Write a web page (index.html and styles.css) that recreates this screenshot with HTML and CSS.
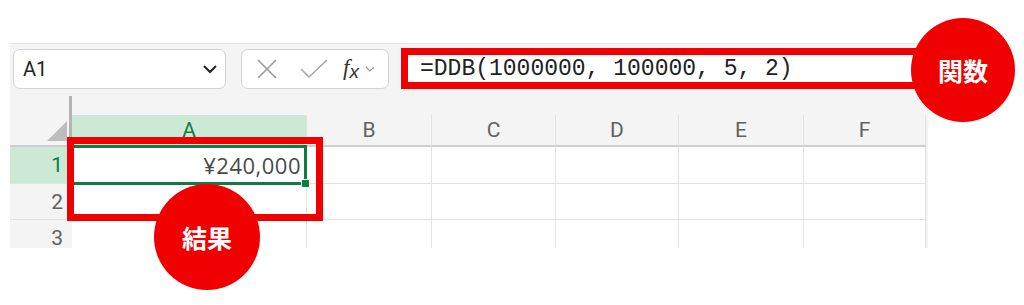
FILE: index.html
```html
<!DOCTYPE html>
<html lang="ja">
<head>
    <meta charset="UTF-8">
    <meta name="viewport" content="width=device-width, initial-scale=1.0">
    <title>DDB関数</title>
    <link rel="stylesheet" href="styles.css">
</head>
<body>
<div class="page">

    <div class="sheet">
        <div class="toolbar">
            <div class="namebox">
                <span>A1</span>
                <svg width="16" height="10" viewBox="0 0 16 10"><path d="M2 2 L8 8 L14 2" fill="none" stroke="#222" stroke-width="2"/></svg>
            </div>
            <div class="fxbox">
                <svg class="cancel" width="22" height="22" viewBox="0 0 22 22"><path d="M2 2 L20 20 M20 2 L2 20" stroke="#9a9a9a" stroke-width="1.6"/></svg>
                <svg class="enter" width="30" height="22" viewBox="0 0 30 22"><path d="M2 11 L10 19 L28 2" fill="none" stroke="#a8a8a8" stroke-width="1.6"/></svg>
                <span class="fx"><i>f</i><sub>x</sub></span>
                <svg width="10" height="6" viewBox="0 0 10 6"><path d="M1 1 L5 5 L9 1" fill="none" stroke="#999" stroke-width="1.2"/></svg>
            </div>
            <div class="formula">=DDB(1000000, 100000, 5, 2)</div>
        </div>

        <div class="split"></div>

        <div class="grid">
            <div class="corner"></div>
            <div class="colhead active">A</div>
            <div class="colhead">B</div>
            <div class="colhead">C</div>
            <div class="colhead">D</div>
            <div class="colhead">E</div>
            <div class="colhead">F</div>

            <div class="rowhead active">1</div>
            <div class="cell selected">¥240,000</div>
            <div class="cell"></div>
            <div class="cell"></div>
            <div class="cell"></div>
            <div class="cell"></div>
            <div class="cell"></div>

            <div class="rowhead">2</div>
            <div class="cell"></div>
            <div class="cell"></div>
            <div class="cell"></div>
            <div class="cell"></div>
            <div class="cell"></div>
            <div class="cell"></div>

            <div class="rowhead">3</div>
            <div class="cell"></div>
            <div class="cell"></div>
            <div class="cell"></div>
            <div class="cell"></div>
            <div class="cell"></div>
            <div class="cell"></div>
        </div>
    </div>

    <!-- 注釈 -->
    <div class="mark result-box"></div>
    <div class="badge badge-func">関数</div>
    <div class="badge badge-result">結果</div>

</div>
</body>
</html>
```

FILE: styles.css
```css
body {
    margin: 0;
    background: #ffffff;
    font-family: Roboto, "Noto Sans", "Noto Sans CJK JP", sans-serif;
    overflow: hidden;
}
.page {
    position: relative;
    width: 1024px;
    height: 305px;
    padding: 43px 0 0 10px;
    box-sizing: border-box;
}
.sheet {
    width: 918px;
    height: 205px;
    background: #f4f4f4;
    border-top: 1px solid #e6e6e6;
    box-sizing: border-box;
    overflow: hidden;
}

/* 数式バー */
.toolbar {
    display: flex;
    align-items: flex-end;
    height: 45px;
}
.namebox, .fxbox {
    display: flex;
    align-items: center;
    height: 40px;
    box-sizing: border-box;
    background: #ffffff;
    border: 1px solid #d4d4d4;
    border-radius: 7px;
}
.namebox {
    width: 213px;
    margin-left: 3px;
    padding: 0 7px 0 9px;
    justify-content: space-between;
    font-size: 20px;
    color: #222;
}
.fxbox {
    width: 148px;
    margin-left: 15px;
    padding: 0 6px 0 14px;
}
.fxbox .enter {
    margin-left: 21px;
}
.fx {
    margin-left: 14px;
    margin-right: 6px;
    font-family: "Liberation Serif", serif;
    font-size: 23px;
    color: #333;
}
.fx sub {
    font-family: "Liberation Sans", sans-serif;
    font-style: italic;
    font-size: 19px;
    vertical-align: -3px;
}
.formula {
    flex: 1;
    height: 41px;
    margin-left: 12px;
    box-sizing: border-box;
    background: #ffffff;
    border: 7px solid #f00000;
    padding: 0 0 0 12px;
    display: flex;
    align-items: center;
    font-family: "Liberation Mono", monospace;
    font-size: 23px;
    color: #222;
}

.split {
    height: 26px;
    position: relative;
}
.split::after {
    content: "";
    position: absolute;
    left: 59px;
    top: 7px;
    bottom: 0;
    width: 3px;
    background: #b4b4b4;
}

/* シート */
.grid {
    display: grid;
    grid-template-columns: 62px 235px 125px 124px 123px 125px 122px;
    grid-template-rows: 32px 37px 36px 36px;
}
.corner {
    position: relative;
    border-bottom: 2px solid #cfcfcf;
}
.corner::before {
    content: "";
    position: absolute;
    right: 0;
    top: 0;
    bottom: 0;
    width: 3px;
    background: #b4b4b4;
}
.corner::after {
    content: "";
    position: absolute;
    right: 5px;
    bottom: 4px;
    width: 0;
    height: 0;
    border-left: 20px solid transparent;
    border-bottom: 20px solid #bdbdbd;
}
.colhead {
    display: flex;
    align-items: center;
    justify-content: center;
    font-size: 21px;
    color: #616161;
    border-right: 1px solid #e2e2e2;
    border-bottom: 2px solid #cfcfcf;
}
.colhead.active {
    background: #cbe9d5;
    color: #107c41;
}
.rowhead {
    display: flex;
    align-items: center;
    justify-content: flex-end;
    padding-right: 9px;
    font-size: 21px;
    color: #616161;
    border-bottom: 1px solid #e2e2e2;
}
.rowhead.active {
    background: #cbe9d5;
    color: #107c41;
}
.cell {
    background: #ffffff;
    border-right: 1px solid #e2e2e2;
    border-bottom: 1px solid #e2e2e2;
}
.cell.selected {
    position: relative;
    display: flex;
    align-items: center;
    justify-content: flex-end;
    padding-right: 5px;
    font-family: "Open Sans", sans-serif;
    font-size: 22px;
    letter-spacing: 0.5px;
    color: #4a4a4a;
}
.cell.selected::after {
    content: "";
    position: absolute;
    top: -2px;
    left: -2px;
    right: -1px;
    bottom: -2px;
    border: 3px solid #107c41;
}
.cell.selected::before {
    content: "";
    position: absolute;
    right: -4px;
    bottom: -5px;
    width: 7px;
    height: 7px;
    background: #107c41;
    border: 1px solid #ffffff;
    z-index: 1;
}

/* 注釈 */
.mark {
    position: absolute;
    border: 7px solid #f00000;
    box-sizing: border-box;
}
.result-box {
    left: 67px;
    top: 137px;
    width: 256px;
    height: 84px;
}
.badge {
    position: absolute;
    display: flex;
    align-items: center;
    justify-content: center;
    border-radius: 50%;
    background: #f00000;
    color: #ffffff;
    font-family: "Noto Sans CJK JP", sans-serif;
    font-weight: bold;
    font-size: 25px;
}
.badge-func {
    left: 911px;
    top: 18px;
    width: 104px;
    height: 104px;
}
.badge-result {
    left: 154px;
    top: 184px;
    width: 106px;
    height: 106px;
}
```
